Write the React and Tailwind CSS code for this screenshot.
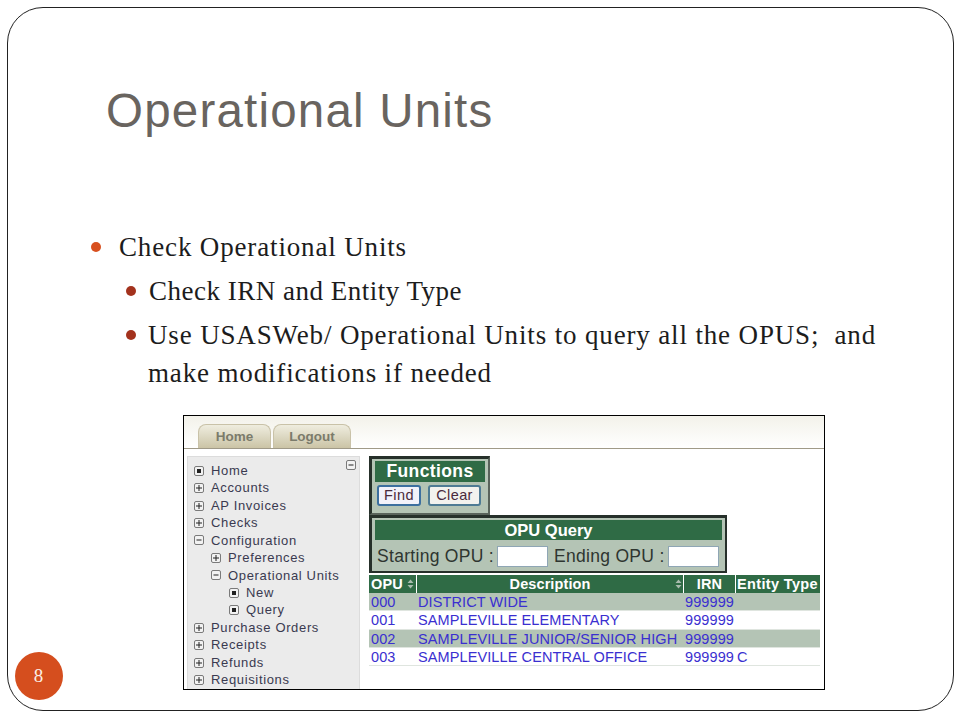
const tree = [
  { label: "Home", icon: "dot", level: 0 },
  { label: "Accounts", icon: "plus", level: 0 },
  { label: "AP Invoices", icon: "plus", level: 0 },
  { label: "Checks", icon: "plus", level: 0 },
  { label: "Configuration", icon: "minus", level: 0 },
  { label: "Preferences", icon: "plus", level: 1 },
  { label: "Operational Units", icon: "minus", level: 1 },
  { label: "New", icon: "dot", level: 2 },
  { label: "Query", icon: "dot", level: 2 },
  { label: "Purchase Orders", icon: "plus", level: 0 },
  { label: "Receipts", icon: "plus", level: 0 },
  { label: "Refunds", icon: "plus", level: 0 },
  { label: "Requisitions", icon: "plus", level: 0 },
];

const levelPad = ["pl-0", "pl-[17px]", "pl-[35px]"];

const opus = [
  { opu: "000", desc: "DISTRICT WIDE", irn: "999999", type: "" },
  { opu: "001", desc: "SAMPLEVILLE ELEMENTARY", irn: "999999", type: "" },
  { opu: "002", desc: "SAMPLEVILLE JUNIOR/SENIOR HIGH", irn: "999999", type: "" },
  { opu: "003", desc: "SAMPLEVILLE CENTRAL OFFICE", irn: "999999", type: "C" },
];

function TreeIcon({ type }) {
  return (
    <svg width="10" height="10" viewBox="0 0 10 10" className="shrink-0">
      <rect x="0.5" y="0.5" width="9" height="9" rx="1.5" fill="#f2f2f2" stroke="#7a7a7a" />
      {type === "dot" && <rect x="3" y="3" width="4" height="4" fill="#222" />}
      {type === "minus" && <rect x="2.5" y="4.5" width="5" height="1" fill="#222" />}
      {type === "plus" && <path d="M2 5h6M5 2v6" stroke="#222" strokeWidth="1" />}
    </svg>
  );
}

function SortIcon() {
  return (
    <svg width="7" height="10" viewBox="0 0 7 10" className="shrink-0">
      <path d="M3.5 0.5L6.5 4H0.5zM3.5 9.5L0.5 6H6.5z" fill="#a9bcae" />
    </svg>
  );
}

function Bullet({ className }) {
  return <span className={`w-[10px] h-[10px] rounded-full shrink-0 ${className}`} />;
}

export default function App() {
  return (
    <div className="w-[960px] h-[720px] bg-white pt-[7px] px-[7px] overflow-hidden">
      <div className="relative w-[947px] h-[704px] border-[1.5px] border-[#222] rounded-[36px] bg-white">
        <h1 className="ml-[98px] mt-[73px] text-[47.5px] leading-[60px] tracking-[1.2px] text-[#69645f] font-['Liberation_Sans',sans-serif]">
          Operational Units
        </h1>

        <div className="mt-[84px] ml-[83px] w-[820px] text-[#1c1c1c] text-[27px] tracking-[0.85px] font-['Liberation_Serif',serif]">
          <div className="flex items-center gap-[18px] h-[44px]">
            <Bullet className="bg-[#d8501f]" />
            <span>Check Operational Units</span>
          </div>
          <div className="flex items-center gap-[13px] h-[44px] pl-[35px]">
            <Bullet className="bg-[#a3321d]" />
            <span className="tracking-[0.5px]">Check IRN and Entity Type</span>
          </div>
          <div className="flex items-start gap-[13px] pl-[35px] leading-[38px] pt-[3px]">
            <Bullet className="bg-[#a3321d] mt-[14px]" />
            <span className="whitespace-pre -ml-[1px]">
              {"Use USASWeb/ Operational Units to query all the OPUS;  and\nmake modifications if needed"}
            </span>
          </div>
        </div>

        <div className="ml-[175px] mt-[23px] w-[642px] h-[275px] border border-black bg-white overflow-hidden font-['Liberation_Sans',sans-serif]">
          <div className="h-[33px] flex items-end pl-[14px] gap-[2px] border-b border-[#a09a88] bg-gradient-to-b from-[#f3f2ea] to-white">
            {["Home", "Logout"].map((tab, i) => (
              <div
                key={tab}
                className={`h-[24px] pt-[2px] flex items-center justify-center rounded-t-[8px] border border-b-0 border-[#c9c2a8] bg-gradient-to-b from-[#efeddf] to-[#cbc4a6] text-[13.5px] font-bold text-[#7b7b6b] ${i === 0 ? "w-[73px]" : "w-[78px]"}`}
              >
                {tab}
              </div>
            ))}
          </div>

          <div className="flex pt-[7px] pl-[3px] gap-[9px]">
            <div className="relative w-[173px] h-[240px] bg-[#ebebeb] border border-[#dcdcdc] pl-[6px] pt-[5px] text-[13px] tracking-[0.65px] text-[#3a3a50]">
              <span className="absolute top-[3px] right-[3px]">
                <TreeIcon type="minus" />
              </span>
              {tree.map((item) => (
                <div key={item.label} className={`flex items-center gap-[7px] h-[17.45px] ${levelPad[item.level]}`}>
                  <TreeIcon type={item.icon} />
                  <span className="whitespace-nowrap">{item.label}</span>
                </div>
              ))}
            </div>

            <div className="flex flex-col w-[452px]">
              <div className="w-[121px] h-[59px] bg-[#b4c4b5] border-t-[3px] border-l-[3px] border-r-[2px] border-b-[2px] border-t-[#26302a] border-l-[#26302a] border-r-[#59635b] border-b-[#59635b] pt-[2px] px-[3px]">
                <div className="h-[21px] bg-[#2f6b45] text-white font-bold text-[17.5px] leading-[21px] text-center tracking-[0.4px]">
                  Functions
                </div>
                <div className="flex gap-[7px] mt-[3px] ml-[2px]">
                  <div className="w-[44px] h-[21px] rounded-[3px] border-2 border-[#3c6f9f] bg-[#f2f2fa] text-[14.5px] leading-[17px] text-center text-[#4a2a3c] tracking-[0.4px]">
                    Find
                  </div>
                  <div className="w-[53px] h-[21px] rounded-[3px] border-2 border-[#4e7b94] bg-[#f2f2ee] text-[14.5px] leading-[17px] text-center text-[#4a2a3c] tracking-[0.4px]">
                    Clear
                  </div>
                </div>
              </div>

              <div className="w-[358px] h-[58px] bg-[#b4c4b5] border-t-[3px] border-l-[3px] border-r-[2px] border-b-[2px] border-[#26302a] pt-[2px] px-[3px]">
                <div className="h-[20px] bg-[#2f6b45] text-white font-bold text-[16.5px] leading-[20px] text-center">
                  OPU Query
                </div>
                <div className="flex items-center mt-[3px] text-[17.5px] tracking-[0.3px] text-[#2e3530] whitespace-nowrap">
                  <span className="w-[122px] pl-[2px]">Starting OPU :</span>
                  <span className="w-[51px] h-[21px] bg-white border border-[#8fa6b5]" />
                  <span className="w-[120px] pl-[6px]">Ending OPU :</span>
                  <span className="w-[51px] h-[21px] bg-white border border-[#8fa6b5]" />
                </div>
              </div>

              <div className="mt-[2px] w-[451px] text-[14.5px] tracking-[0.1px]">
                <div className="grid grid-cols-[47px_266px_51px_84px] gap-x-[1px] h-[18px] text-white font-bold leading-[18px] bg-white">
                  <div className="bg-[#2f6b45] flex items-center justify-between px-[2px]">
                    OPU <SortIcon />
                  </div>
                  <div className="relative bg-[#2f6b45] text-center">
                    Description
                    <span className="absolute right-[1px] top-[4px]">
                      <SortIcon />
                    </span>
                  </div>
                  <div className="bg-[#2f6b45] text-center">IRN</div>
                  <div className="bg-[#2f6b45] pl-[1px] whitespace-nowrap tracking-[0.35px]">Entity Type</div>
                </div>
                {opus.map((row, i) => (
                  <div
                    key={row.opu}
                    className={`grid grid-cols-[47px_266px_51px_84px] gap-x-[1px] h-[18.3px] leading-[18px] text-[#3a2fd0] whitespace-nowrap border-b border-[#dfe5df] ${i % 2 === 0 ? "bg-[#b4c4b5]" : "bg-white"}`}
                  >
                    <div className="pl-[2px]">{row.opu}</div>
                    <div className="pl-[1px]">{row.desc}</div>
                    <div className="pl-[1px]">{row.irn}</div>
                    <div className="pl-[1px]">{row.type}</div>
                  </div>
                ))}
              </div>
            </div>
          </div>
        </div>

        <div className="absolute left-[6.5px] top-[644px] w-[48px] h-[48px] rounded-full bg-[#d54e1e] flex items-center justify-center text-[#fbeee6] text-[19px] font-['Liberation_Serif',serif]">
          8
        </div>
      </div>
    </div>
  );
}
